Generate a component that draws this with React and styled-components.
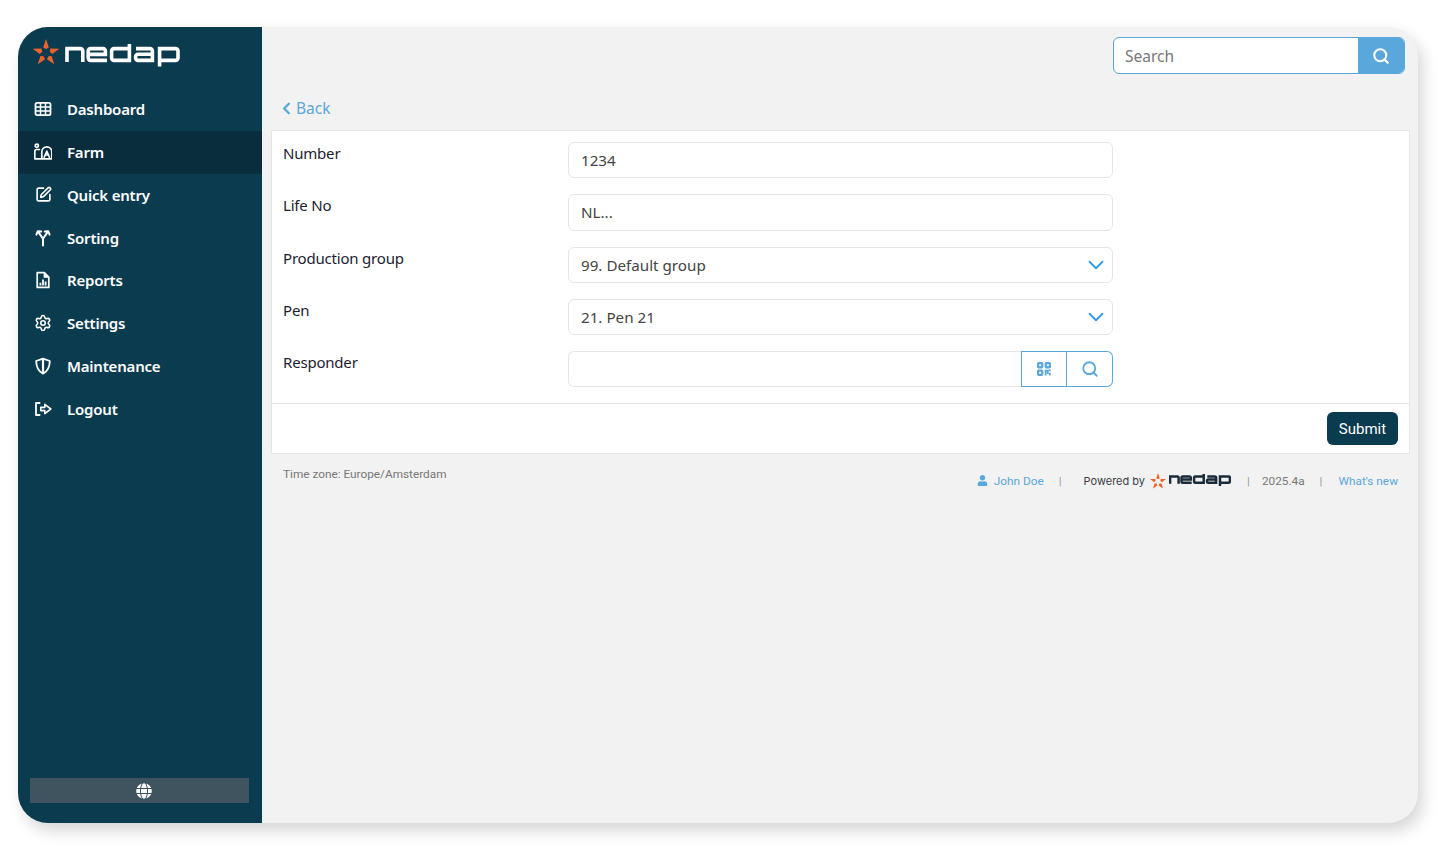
import React from "react";
import styled, { createGlobalStyle } from "styled-components";
import { ChevronDown, ChevronLeft, Search, Settings, SquarePen } from "lucide-react";
import { FaGlobe, FaUser } from "react-icons/fa";

const Global = createGlobalStyle`
  html, body { margin: 0; background: #fff; }
  * { box-sizing: border-box; }
  body { font-family: "Noto Sans", "Open Sans", sans-serif; }
`;

const Page = styled.div`
  height: 854px;
  padding: 27px 22px 31px 18px;
`;
const Shell = styled.div`
  height: 100%;
  display: flex;
  border-radius: 30px;
  overflow: hidden;
  background: #f2f2f2;
  box-shadow: 5px 8px 16px rgba(0, 0, 0, 0.16);
`;
const Sidebar = styled.aside`
  width: 244px;
  flex: none;
  display: flex;
  flex-direction: column;
  background: #0b3b4f;
`;
const Brand = styled.div`
  height: 61px;
  flex: none;
  display: flex;
  align-items: flex-start;
  padding: 12px 0 0 15px;
  gap: 6px;
`;
const WordmarkSlot = styled.span`
  display: block;
  margin-top: 5px;
`;
const Nav = styled.nav`
  display: flex;
  flex-direction: column;
`;
const NavRow = styled.a`
  height: 42.75px;
  display: flex;
  align-items: center;
  gap: 15px;
  padding-left: 16px;
  color: #fff;
  font-size: 15px;
  font-weight: 600;
  letter-spacing: -0.2px;
  background: ${(p) => (p.$active ? "#0a2d3d" : "transparent")};
`;
const IconSlot = styled.span`
  width: 18px;
  height: 18px;
  display: flex;
  align-items: center;
  justify-content: center;
`;
const LangBar = styled.div`
  margin: auto 13px 20px 12px;
  height: 25px;
  display: flex;
  align-items: center;
  justify-content: center;
  padding-left: 9px;
  background: #40545f;
  color: #fff;
  font-size: 16px;
`;
const Main = styled.main`
  flex: 1;
  min-width: 0;
  display: flex;
  flex-direction: column;
  padding: 10px 8px 0 9px;
`;
const TopBar = styled.div`
  display: flex;
  justify-content: flex-end;
  margin-right: 5px;
`;
const SearchBox = styled.div`
  width: 292px;
  height: 37px;
  display: flex;
  border: 1px solid #5aa7db;
  border-radius: 6px;
  overflow: hidden;
  background: #fff;
`;
const SearchText = styled.span`
  flex: 1;
  padding-left: 11px;
  line-height: 36px;
  font-size: 15.5px;
  color: #777;
`;
const SearchButton = styled.span`
  width: 46px;
  display: flex;
  align-items: center;
  justify-content: center;
  background: #5aa7db;
  color: #fff;
`;
const BackRow = styled.a`
  height: 56px;
  padding: 23px 0 0 11px;
  display: flex;
  align-items: flex-start;
  color: #5aa7db;
  font-size: 15.5px;
  line-height: 22px;
`;
const BackIcon = styled.span`
  width: 14px;
  height: 22px;
  display: flex;
  align-items: center;
`;
const BackChevron = styled(ChevronLeft)`
  margin-left: -5px;
`;
const Card = styled.section`
  background: #fff;
  border: 1px solid #e5e5e5;
`;
const Form = styled.div`
  padding: 11px 296px 0 11px;
  display: flex;
  flex-direction: column;
  gap: 16px;
  height: 271.5px;
`;
const Row = styled.div`
  display: grid;
  grid-template-columns: 285px 545px;
  height: 36.25px;
`;
const Label = styled.label`
  font-size: 15px;
  letter-spacing: -0.2px;
  line-height: 23px;
  color: #1c2230;
`;
const Field = styled.div`
  display: flex;
  align-items: center;
  justify-content: space-between;
  height: 100%;
  padding: 0 3px 0 12px;
  border: 1px solid #e5e5e5;
  border-radius: 6px;
  font-size: 15.2px;
  color: #444;
  background: #fff;
`;
const Group = styled.div`
  display: flex;
  height: 100%;
`;
const GroupInput = styled.div`
  flex: 1;
  border: 1px solid #e5e5e5;
  border-right: 0;
  border-radius: 6px 0 0 6px;
`;
const GroupButton = styled.span`
  width: ${(p) => p.$w}px;
  display: flex;
  align-items: center;
  justify-content: center;
  border: 1px solid #5aa7db;
  border-left-width: ${(p) => (p.$last ? 0 : 1)}px;
  border-radius: ${(p) => (p.$last ? "0 6px 6px 0" : 0)};
  color: #5aa7db;
`;
const CardFoot = styled.div`
  display: flex;
  justify-content: flex-end;
  align-items: center;
  height: 50px;
  padding: 0 11px 0 0;
  border-top: 1px solid #e5e5e5;
`;
const Submit = styled.button`
  width: 71px;
  height: 33px;
  border: 0;
  border-radius: 6px;
  background: #0b3b4f;
  color: #fff;
  font-family: Roboto, sans-serif;
  font-size: 15px;
  padding: 2px 0 0;
`;
const Footer = styled.footer`
  display: flex;
  justify-content: space-between;
  align-items: flex-start;
  padding: 13px 12px 0 12px;
  font-family: Roboto, sans-serif;
  font-size: 11.8px;
  color: #777;
`;
const FootLeft = styled.span`
  line-height: 14px;
`;
const FootRight = styled.div`
  display: flex;
  align-items: center;
  height: 20px;
  margin-top: 4px;
`;
const FootLink = styled.span`
  color: #5aa7db;
  display: flex;
  align-items: center;
  gap: 6px;
`;
const Divider = styled.span`
  margin: ${(p) => p.$m};
  color: #999;
`;
const Powered = styled.span`
  display: flex;
  align-items: center;
  gap: 3.5px;
  font-family: Inter, sans-serif;
  font-size: 11px;
  color: #3a3f48;
`;
const PoweredLabel = styled.span`
  margin-right: 1px;
`;
const Version = styled.span`
  color: #777;
`;

const Star = ({ size = 26 }) => (
  <svg width={size} height={size} viewBox="0 0 26 26" aria-hidden="true">
    {[0, 72, 144, 216, 288].map((a) => (
      <polygon key={a} points="13,0 15.8,8.4 13,10 10.2,8.4" fill="#f0622c" transform={`rotate(${a} 13 14)`} />
    ))}
  </svg>
);

const Wordmark = ({ width = 115, color = "#fff", weight = 3.6 }) => (
  <svg width={width} height={(width * 23) / 115} viewBox="0 0 115 23" aria-label="nedap" role="img"
    fill="none" stroke={color} strokeWidth={weight}>
    <path d="M2 18V4.6H15.4a2.4 2.4 0 0 1 2.4 2.4V18" />
    <path d="M42 16.4H25.6a2.4 2.4 0 0 1-2.4-2.4V7a2.4 2.4 0 0 1 2.4-2.4H38a2.4 2.4 0 0 1 2.4 2.4V10.4H23.2" />
    <path d="M64.4 0V16.4H49a2.4 2.4 0 0 1-2.4-2.4V7a2.4 2.4 0 0 1 2.4-2.4H64.4" />
    <path d="M71 4.6H85a2.4 2.4 0 0 1 2.4 2.4V16.4H73a2.4 2.4 0 0 1-2.4-2.4V12.6a2.4 2.4 0 0 1 2.4-2.4H87.4" />
    <path d="M94.6 22.5V4.6H110.6a2.4 2.4 0 0 1 2.4 2.4V14a2.4 2.4 0 0 1-2.4 2.4H94.6" />
  </svg>
);

const Ico = ({ children }) => (
  <svg width="18" height="18" viewBox="0 0 18 18" fill="none" stroke="#fff" strokeWidth="1.8"
    strokeLinecap="round" strokeLinejoin="round" aria-hidden="true">
    {children}
  </svg>
);
const TableIcon = () => (
  <Ico>
    <rect x="1.5" y="2.8" width="15" height="12.4" rx="1.6" />
    <path d="M1.5 7h15M1.5 11h15M6.5 3v12M11.5 3v12" strokeWidth="1.5" strokeLinecap="butt" />
  </Ico>
);
const FarmIcon = () => (
  <Ico>
    <circle cx="2.8" cy="2.8" r="1.6" strokeWidth="1.7" />
    <path d="M.8 15.8V8c0-1 .6-1.5 1.6-1.5h3M.8 15.8h17V8.8a5 5 0 0 0-10 0v7" strokeWidth="1.7" />
    <path d="M10.2 14.2l2.6-6.2 2.6 6.2M11 12h3.6" strokeWidth="1.6" />
  </Ico>
);
const SortIcon = () => (
  <Ico>
    <path d="M9 16.5V9.8L4.6 3.4M9 9.8 13.4 3.4M2.4 5.6 3.8 2.2l3.4.4M15.6 5.6 14.2 2.2l-3.4.4" strokeWidth="2" />
  </Ico>
);
const ReportIcon = () => (
  <Ico>
    <path d="M3.2 16.4V1.6h7.2l4.4 4.4v10.4z" strokeWidth="1.7" />
    <path d="M10.2 2v4.2h4.2" fill="#fff" strokeWidth="1.2" />
    <path d="M6.4 14.4v-2.6M9 14.4V8.6M11.6 14.4v-3.8" strokeWidth="1.8" strokeLinecap="butt" />
  </Ico>
);
const ShieldIcon = () => (
  <Ico>
    <path d="M9 1.6 2.2 4c0 6 1.6 10 6.8 12.6C14.2 14 15.8 10 15.8 4z" strokeWidth="1.8" />
    <path d="M9 2v14" strokeWidth="2.2" />
  </Ico>
);
const LogoutIcon = () => (
  <Ico>
    <path d="M5.6 3H2v12h3.6" strokeWidth="1.8" />
    <path d="M6.8 7.4h4V4.4L16.8 9l-6 4.6v-3h-4z" strokeWidth="1.6" />
  </Ico>
);
const QrIcon = () => (
  <svg width="14" height="14" viewBox="0 0 14 14" fill="none" stroke="#5aa7db" strokeWidth="2.2" aria-hidden="true">
    <rect x="1.1" y="1.1" width="4.2" height="4.2" rx="0.6" />
    <rect x="8.7" y="1.1" width="4.2" height="4.2" rx="0.6" />
    <rect x="1.1" y="8.7" width="4.2" height="4.2" rx="0.6" />
    <path d="M8.6 13.5V8.6h2.2V12M11.8 8.4h2M12.8 10.8v2.7" strokeWidth="1.8" />
  </svg>
);

const items = [
  ["Dashboard", <TableIcon />],
  ["Farm", <FarmIcon />, true],
  ["Quick entry", <SquarePen size={17} color="#fff" strokeWidth={2.3} />],
  ["Sorting", <SortIcon />],
  ["Reports", <ReportIcon />],
  ["Settings", <Settings size={18} color="#fff" strokeWidth={2.1} />],
  ["Maintenance", <ShieldIcon />],
  ["Logout", <LogoutIcon />],
];

const Select = ({ children }) => (
  <Field>
    {children}
    <ChevronDown size={26} color="#2f9be6" strokeWidth={1.7} />
  </Field>
);

export default function App() {
  return (
    <Page>
      <Global />
      <Shell>
        <Sidebar>
          <Brand>
            <Star />
            <WordmarkSlot>
              <Wordmark />
            </WordmarkSlot>
          </Brand>
          <Nav>
            {items.map(([label, icon, active]) => (
              <NavRow key={label} $active={active}>
                <IconSlot>{icon}</IconSlot>
                {label}
              </NavRow>
            ))}
          </Nav>
          <LangBar>
            <FaGlobe />
          </LangBar>
        </Sidebar>
        <Main>
          <TopBar>
            <SearchBox>
              <SearchText>Search</SearchText>
              <SearchButton>
                <Search size={18} strokeWidth={2.8} />
              </SearchButton>
            </SearchBox>
          </TopBar>
          <BackRow>
            <BackIcon>
              <BackChevron size={19} strokeWidth={3} />
            </BackIcon>
            Back
          </BackRow>
          <Card>
            <Form>
              <Row>
                <Label>Number</Label>
                <Field>1234</Field>
              </Row>
              <Row>
                <Label>Life No</Label>
                <Field>NL...</Field>
              </Row>
              <Row>
                <Label>Production group</Label>
                <Select>99. Default group</Select>
              </Row>
              <Row>
                <Label>Pen</Label>
                <Select>21. Pen 21</Select>
              </Row>
              <Row>
                <Label>Responder</Label>
                <Group>
                  <GroupInput />
                  <GroupButton $w={46}>
                    <QrIcon />
                  </GroupButton>
                  <GroupButton $w={46} $last>
                    <Search size={18} strokeWidth={2.4} />
                  </GroupButton>
                </Group>
              </Row>
            </Form>
            <CardFoot>
              <Submit>Submit</Submit>
            </CardFoot>
          </Card>
          <Footer>
            <FootLeft>Time zone: Europe/Amsterdam</FootLeft>
            <FootRight>
              <FootLink>
                <FaUser size={11} />
                John Doe
              </FootLink>
              <Divider $m="0 22px 0 15px">|</Divider>
              <Powered>
                <PoweredLabel>Powered by</PoweredLabel>
                <Star size={16} />
                <Wordmark width={62} color="#1b2a3a" weight={4.6} />
              </Powered>
              <Divider $m="0 12px 0 16px">|</Divider>
              <Version>2025.4a</Version>
              <Divider $m="0 16px 0 15px">|</Divider>
              <FootLink>What's new</FootLink>
            </FootRight>
          </Footer>
        </Main>
      </Shell>
    </Page>
  );
}
